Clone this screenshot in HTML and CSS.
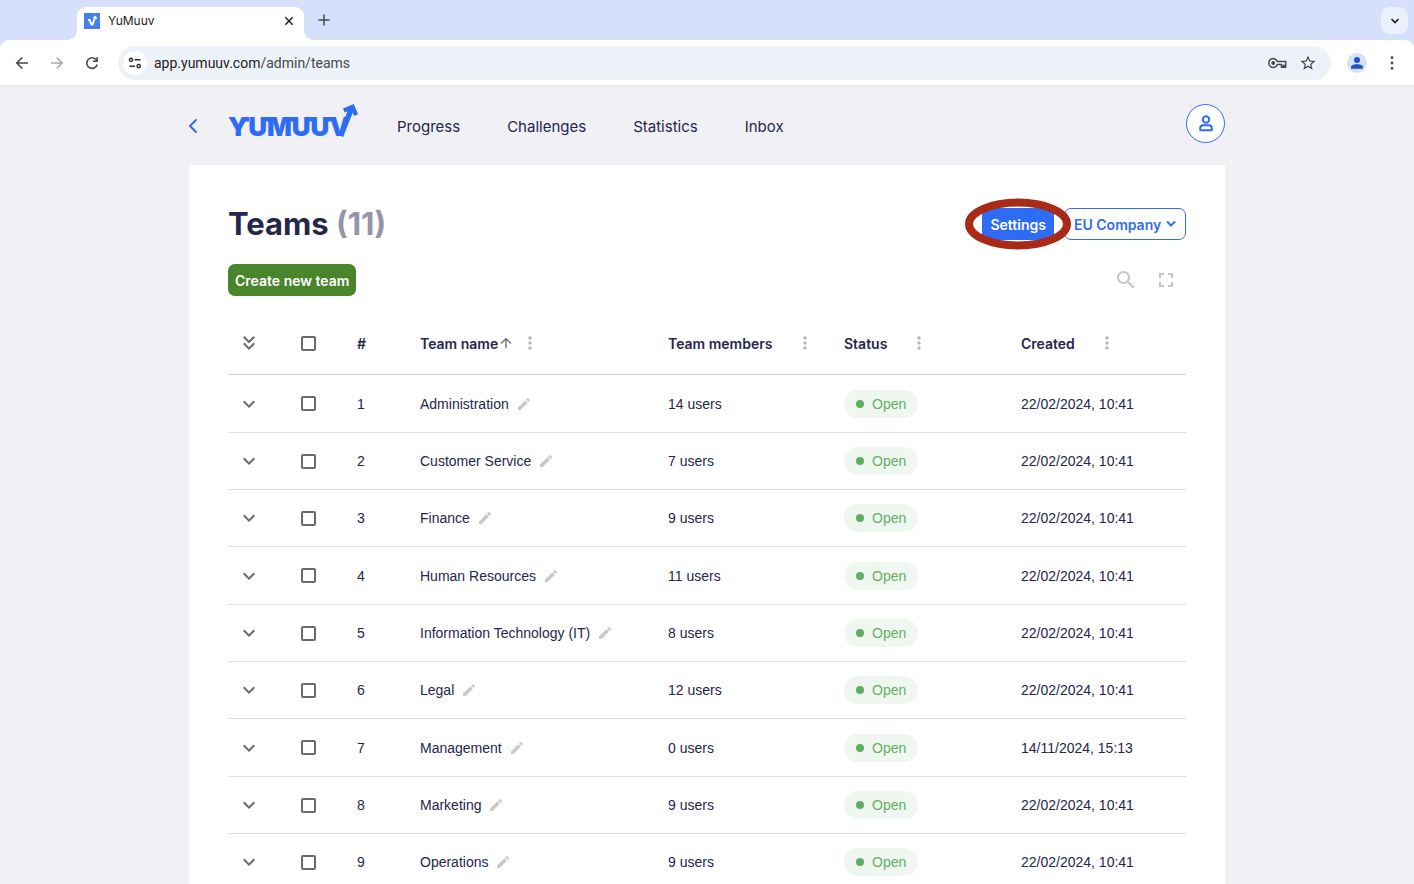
FILE: index.html
```html
<!DOCTYPE html>
<html lang="en">
<head>
<meta charset="utf-8">
<title>YuMuuv</title>
<link rel="stylesheet" href="styles.css">
</head>
<body>
<svg class="defs" aria-hidden="true">
  <symbol id="chev" viewBox="0 0 24 24"><path d="M16.59 8.59 12 13.17 7.41 8.59 6 10l6 6 6-6z"/></symbol>
  <symbol id="dots" viewBox="0 0 24 24"><path d="M12 8c1.1 0 2-.9 2-2s-.9-2-2-2-2 .9-2 2 .9 2 2 2m0 2c-1.1 0-2 .9-2 2s.9 2 2 2 2-.9 2-2-.9-2-2-2m0 6c-1.1 0-2 .9-2 2s.9 2 2 2 2-.9 2-2-.9-2-2-2"/></symbol>
  <symbol id="pen" viewBox="0 0 24 24"><path d="M3 17.25V21h3.75L17.81 9.94l-3.75-3.75zM20.71 7.04c.39-.39.39-1.02 0-1.41l-2.34-2.34a.9959.9959 0 0 0-1.41 0l-1.83 1.83 3.75 3.75z"/></symbol>
</svg>

<div class="tabstrip">
  <div class="tab">
    <svg class="favicon" viewBox="0 0 16 16"><path fill="#4680e8" d="M0 0h16v16H0z"/><path d="M4 7h1.500l2 4.500h1l2.500-7" fill="none" stroke="#fff" stroke-width="1.900"/><path d="M8.500 4.800 11.800 2.500l1.400 3.700z" fill="#fff"/></svg>
    <span class="tab-title">YuMuuv</span>
    <button class="plain" aria-label="Close tab"><svg width="10" height="10" viewBox="0 0 10 10"><path d="m1.300 1.300 7.400 7.400m0-7.400-7.400 7.400" stroke="#1f2023" stroke-width="1.500"/></svg></button>
  </div>
  <button class="plain newtab" aria-label="New tab"><svg width="12" height="12" viewBox="0 0 12 12"><path d="M6 .5v11M.5 6h11" stroke="#43474e" stroke-width="1.500"/></svg></button>
  <button class="plain tabsearch" aria-label="Search tabs"><svg width="10" height="8" viewBox="0 0 10 8"><path d="m1.500 2 3.500 3.500L8.500 2" fill="none" stroke="#222" stroke-width="1.700"/></svg></button>
</div>
<div class="toolbar">
  <button class="plain" aria-label="Back"><svg width="14" height="14" viewBox="0 0 14 14"><path d="M13 7H2m5.300-5.500L1.800 7l5.500 5.500" fill="none" stroke="#45484c" stroke-width="1.600"/></svg></button>
  <button class="plain" aria-label="Forward"><svg width="14" height="14" viewBox="0 0 14 14"><path d="M1 7h11M6.700 1.500 12.200 7l-5.500 5.500" fill="none" stroke="#aaa" stroke-width="1.600"/></svg></button>
  <button class="plain" aria-label="Reload"><svg width="14" height="14" viewBox="0 0 14 14"><path d="M12.200 8.500A5.300 5.300 0 1 1 11 3.500l1 1.200" fill="none" stroke="#45484c" stroke-width="1.600"/><path d="M12.900 1v5H8V4.600h3.500V1z" fill="#45484c"/></svg></button>
  <div class="address">
    <button class="plain site" aria-label="Site information"><svg width="14" height="12" viewBox="0 0 14 12"><g fill="none" stroke="#333" stroke-width="1.500"><circle cx="3" cy="2.800" r="1.600"/><path d="M6.500 2.800h6M1.500 9.200h5.500"/><circle cx="10.700" cy="9.200" r="1.600"/></g></svg></button>
    <span class="url">app.yumuuv.com<span class="path">/admin/teams</span></span>
    <button class="plain" aria-label="Passwords"><svg width="19" height="12" viewBox="0 0 19 12"><g fill="none" stroke="#45484c" stroke-width="1.500"><path d="M9.300 4.500a4.400 4.400 0 1 0 0 3h4.200v2.800h1.800V8.500h1v1.800h1.400V4.500z"/></g><circle cx="5.200" cy="6" r="1.900" fill="#45484c"/></svg></button>
    <button class="plain star" aria-label="Bookmark"><svg width="18" height="18" viewBox="0 0 24 24"><path fill="#45484c" d="m22 9.240-7.190-.62L12 2 9.190 8.630 2 9.240l5.460 4.730L5.820 21 12 17.270 18.180 21l-1.630-7.030zM12 15.400l-3.760 2.270 1-4.280-3.320-2.880 4.380-.38L12 6.100l1.710 4.040 4.380.38-3.320 2.880 1 4.280z"/></svg></button>
  </div>
  <button class="plain profile" aria-label="Profile"><svg width="20" height="20" viewBox="0 0 20 20"><circle cx="10" cy="10" r="10" fill="#d6e0fb"/><circle cx="10" cy="7" r="3" fill="#2050c4"/><path d="M4 15.800v-1.600C4 12 7.500 11.200 10 11.200s6 .8 6 3v1.600z" fill="#2050c4"/></svg></button>
  <button class="plain menu" aria-label="Menu"><svg width="4" height="14" viewBox="0 0 4 14" fill="#45484c"><circle cx="2" cy="1.700" r="1.400"/><circle cx="2" cy="7" r="1.400"/><circle cx="2" cy="12.300" r="1.400"/></svg></button>
</div>

<div class="page">
  <header class="site-header">
    <a class="back" href="#" aria-label="Back"><svg width="9" height="16" viewBox="0 0 9 16"><path d="M7 2 1 8l6 6" fill="none" stroke="#2e6cf6" stroke-width="1.900" stroke-linecap="round" stroke-linejoin="round"/></svg></a>
    <a class="logo" href="#" aria-label="YuMuuv"><svg width="130" height="34" viewBox="0 0 130 34"><text class="wordmark" x="0" y="32">YUMUUV</text><path fill="#2e6cf6" d="M14 13h7v4.500h-7zM35 13h7v4.500h-7zM60 13h6v4.500h-6zM79 13h7v4.500h-7zM98 13h7v4.500h-7z"/><path d="M112.500 32 123.500 4.500" fill="none" stroke="#2e6cf6" stroke-width="5.500"/><path d="m115.800 6.600 8.800-3.800 3.500 8.400" fill="none" stroke="#2e6cf6" stroke-width="4.400"/></svg></a>
    <nav class="nav"><a href="#">Progress</a><a href="#">Challenges</a><a href="#">Statistics</a><a href="#">Inbox</a></nav>
    <button class="avatar" aria-label="Account"><svg width="14" height="17" viewBox="0 0 14 17"><g fill="none" stroke="#2e6cf6" stroke-width="2"><circle cx="7" cy="4.500" r="3.200"/><path d="M1.200 15.200v-2c0-1.800 1.300-2.900 3-2.900h5.600c1.700 0 3 1.100 3 2.900v2z" stroke-linejoin="round"/></g></svg></button>
  </header>
  <main class="card">
    <div class="row">
      <h1>Teams <span>(11)</span></h1>
      <div class="actions">
        <div class="highlight"><button class="btn primary">Settings</button><svg class="ring" width="106" height="52" viewBox="0 0 106 52"><ellipse cx="53" cy="26" rx="49" ry="21.500" fill="none" stroke="#a92b17" stroke-width="8"/></svg></div>
        <div class="company"><select class="btn" aria-label="Company"><option>EU Company</option></select><svg width="10" height="8" viewBox="0 0 10 8"><path d="m1.500 2 3.500 3.500L8.500 2" fill="none" stroke="#2e6cf6" stroke-width="2" stroke-linecap="round"/></svg></div>
      </div>
    </div>
    <div class="row tools">
      <button class="btn create">Create new team</button>
      <div class="icons">
        <button class="plain" aria-label="Search"><svg width="24" height="24" viewBox="0 0 24 24" fill="#c6c6c6"><path d="M15.500 14h-.79l-.28-.27C15.410 12.590 16 11.110 16 9.500 16 5.910 13.090 3 9.500 3S3 5.910 3 9.500 5.910 16 9.500 16c1.610 0 3.090-.59 4.230-1.570l.27.28v.79l5 4.990L20.490 19zm-6 0C7.010 14 5 11.990 5 9.500S7.010 5 9.500 5 14 7.010 14 9.500 11.990 14 9.500 14"/></svg></button>
        <button class="plain" aria-label="Full screen"><svg width="24" height="24" viewBox="0 0 24 24" fill="#c6c6c6"><path d="M7 14H5v5h5v-2H7zm-2-4h2V7h3V5H5zm12 7h-3v2h5v-5h-2zM14 5v2h3v3h2V5z"/></svg></button>
      </div>
    </div>
    <table>
      <colgroup><col class="c-exp"><col class="c-chk"><col class="c-num"><col class="c-name"><col class="c-mem"><col class="c-stat"><col></colgroup>
      <thead><tr>
        <th><button class="plain exp" aria-label="Expand all"><svg width="24" height="24" viewBox="0 0 24 24"><path d="M18 6.410 16.590 5 12 9.580 7.410 5 6 6.410l6 6z"/><path d="m18 13-1.410-1.410L12 16.170l-4.590-4.580L6 13l6 6z"/></svg></button></th>
        <th><input type="checkbox" aria-label="Select all"></th>
        <th>#</th>
        <th><div class="h">Team name<svg class="sort" viewBox="0 0 24 24"><path d="m4 12 1.410 1.410L11 7.830V20h2V7.830l5.580 5.590L20 12l-8-8z"/></svg><button class="plain" aria-label="Column actions"><svg class="dots"><use href="#dots"/></svg></button></div></th>
        <th><div class="h">Team members<span class="sort"></span><button class="plain" aria-label="Column actions"><svg class="dots"><use href="#dots"/></svg></button></div></th>
        <th><div class="h">Status<span class="sort"></span><button class="plain" aria-label="Column actions"><svg class="dots"><use href="#dots"/></svg></button></div></th>
        <th><div class="h">Created<span class="sort"></span><button class="plain" aria-label="Column actions"><svg class="dots"><use href="#dots"/></svg></button></div></th>
      </tr></thead>
      <tbody id="teams"></tbody>
    </table>
  </main>
</div>
<script src="teams.js"></script>
</body>
</html>
```
FILE: teams.js
```js
const created = "22/02/2024, 10:41";
const teams = [
  ["Administration", 14, created],
  ["Customer Service", 7, created],
  ["Finance", 9, created],
  ["Human Resources", 11, created],
  ["Information Technology (IT)", 8, created],
  ["Legal", 12, created],
  ["Management", 0, "14/11/2024, 15:13"],
  ["Marketing", 9, created],
  ["Operations", 9, created]
];
document.getElementById("teams").innerHTML = teams.map(([name, users, date], i) => `
<tr>
  <td><button class="plain exp" aria-label="Expand ${name}"><svg width="24" height="24"><use href="#chev"/></svg></button></td>
  <td><input type="checkbox" aria-label="Select ${name}"></td>
  <td>${i + 1}</td>
  <td><div class="name">${name}<button class="plain" aria-label="Edit ${name}"><svg class="pen"><use href="#pen"/></svg></button></div></td>
  <td>${users} users</td>
  <td><span class="chip">Open</span></td>
  <td>${date}</td>
</tr>`).join("");
```
FILE: styles.css
```css
* { box-sizing: border-box; }
body { margin: 0; height: 100vh; overflow: hidden; display: flex; flex-direction: column; background: #f1f0f5; color: #25264d; font-family: Inter, sans-serif; }
svg { display: block; flex: none; }
.defs { position: absolute; width: 0; height: 0; }
a { color: inherit; text-decoration: none; }
button, select { font: inherit; color: inherit; }
.plain { border: 0; padding: 0; background: none; display: flex; align-items: center; justify-content: center; }

.tabstrip { flex: none; height: 48px; margin-bottom: -8px; padding: 7px 6px 8px 77px; display: flex; align-items: center; background: #d6e0fb; }
.tab { position: relative; width: 227px; height: 33px; padding: 0 10px 6px 7px; display: flex; align-items: center; gap: 8px; background: #fff; border-radius: 9px 9px 0 0; font-size: 12px; color: #1f2023; }
.tab::before, .tab::after { content: ""; position: absolute; bottom: 0; width: 10px; height: 10px; }
.tab::before { left: -10px; background: radial-gradient(circle at 0 0, #d6e0fb 10px, #fff 10px); }
.tab::after { right: -10px; background: radial-gradient(circle at 100% 0, #d6e0fb 10px, #fff 10px); }
.favicon { width: 16px; height: 16px; }
.tab-title { flex: 1; }
.newtab { margin: 0 auto 7px 14px; }
.tabsearch { width: 27px; height: 27px; margin-bottom: 6px; border-radius: 9px; background: #ebf1fb; }

.toolbar { position: relative; flex: none; height: 46px; padding: 0 20px 0 15px; display: flex; align-items: center; gap: 21px; background: #fff; border-radius: 9px 9px 0 0; border-bottom: 1px solid #e4e5ea; }
.address { flex: 1; height: 34px; margin-left: -2px; padding: 0 14px 0 5px; display: flex; align-items: center; border-radius: 17px; background: #edf1f8; font: 14px Roboto, sans-serif; color: #1f2023; }
.site { width: 24px; height: 24px; margin-right: 7px; border-radius: 50%; background: #fff; }
.url { flex: 1; }
.path { color: #46494d; }
.star { margin-left: 12px; }
.profile { margin-left: -5px; }
.menu { margin-left: 2px; }

.page { width: 100%; max-width: 1036px; margin: 0 auto; flex: 1; min-height: 0; display: flex; flex-direction: column; }
.site-header { flex: none; padding: 18px 0 22px; display: flex; align-items: flex-start; }
.back { width: 39px; padding-top: 14px; }
.logo svg { overflow: visible; }
.wordmark { font: 900 26px Inter, sans-serif; fill: #2e6cf6; }
.nav { flex: 1; margin-left: 39px; padding-top: 11px; display: flex; gap: 47px; font-size: 15px; line-height: 24px; }
.avatar { width: 39px; height: 39px; padding: 0; display: flex; align-items: center; justify-content: center; border: 1px solid #2e6cf6; border-radius: 50%; background: #fff; }

.card { flex: 1; min-height: 0; padding: 43px 39px 0; background: #fff; }
.row { display: flex; align-items: center; justify-content: space-between; }
h1 { margin: 0; font-size: 31px; line-height: 32px; font-weight: 700; }
h1 span { color: #9594aa; }
.actions { display: flex; gap: 10px; }
.highlight { position: relative; z-index: 1; }
.ring { position: absolute; left: 50%; top: 50%; transform: translate(-50%, -50%); pointer-events: none; }
.btn { height: 32px; padding: 0 8px; border: 0; border-radius: 7px; font-size: 14px; font-weight: 600; }
.primary { background: #2e6cf6; color: #fff; border-radius: 2px; }
.company { position: relative; }
.company select { width: 122px; appearance: none; padding: 0 20px 0 9px; border: 1px solid #2e6cf6; background: #fff; color: #2e6cf6; }
.company svg { position: absolute; right: 10px; top: 12px; pointer-events: none; }
.create { padding: 0 7px; background: #48852b; color: #fff; }
.tools { margin-top: 24px; }
.icons { display: flex; gap: 16px; padding-right: 8px; }

table { width: 100%; margin-top: 16px; border-collapse: separate; border-spacing: 0; table-layout: fixed; font: 14px "Liberation Sans", Arial, sans-serif; }
.c-exp { width: 60px; }
.c-chk { width: 69px; }
.c-num { width: 63px; }
.c-name { width: 248px; }
.c-mem { width: 176px; }
.c-stat { width: 177px; }
th, td { padding: 0; text-align: left; vertical-align: middle; white-space: nowrap; border-bottom: 1px solid #e0e0e0; }
th { height: 63px; font: 600 14px Inter, sans-serif; border-color: #d2d2d2; }
td { height: 57px; }
tr:nth-child(3n+1) td { height: 58px; }
.exp { margin-left: 9px; }
.exp svg { fill: #6b6b6b; }
input { appearance: none; display: block; width: 15px; height: 15px; margin: 0 0 0 13px; border: 2px solid #6b6b6b; border-radius: 2px; background: #fff; }
.h, .name { display: flex; align-items: center; }
.sort { width: 16px; height: 16px; fill: #6b6b6b; }
.dots { width: 20px; height: 20px; margin-left: 6px; fill: #b5b5b5; }
.name { gap: 7px; }
.pen { width: 16px; height: 16px; fill: #c9c9c9; }
.chip { display: inline-flex; align-items: center; gap: 8px; height: 28px; padding: 0 12px; border-radius: 14px; background: #eff7f0; color: #63b065; }
.chip::before { content: ""; width: 8px; height: 8px; border-radius: 50%; background: #60ad62; }
```
